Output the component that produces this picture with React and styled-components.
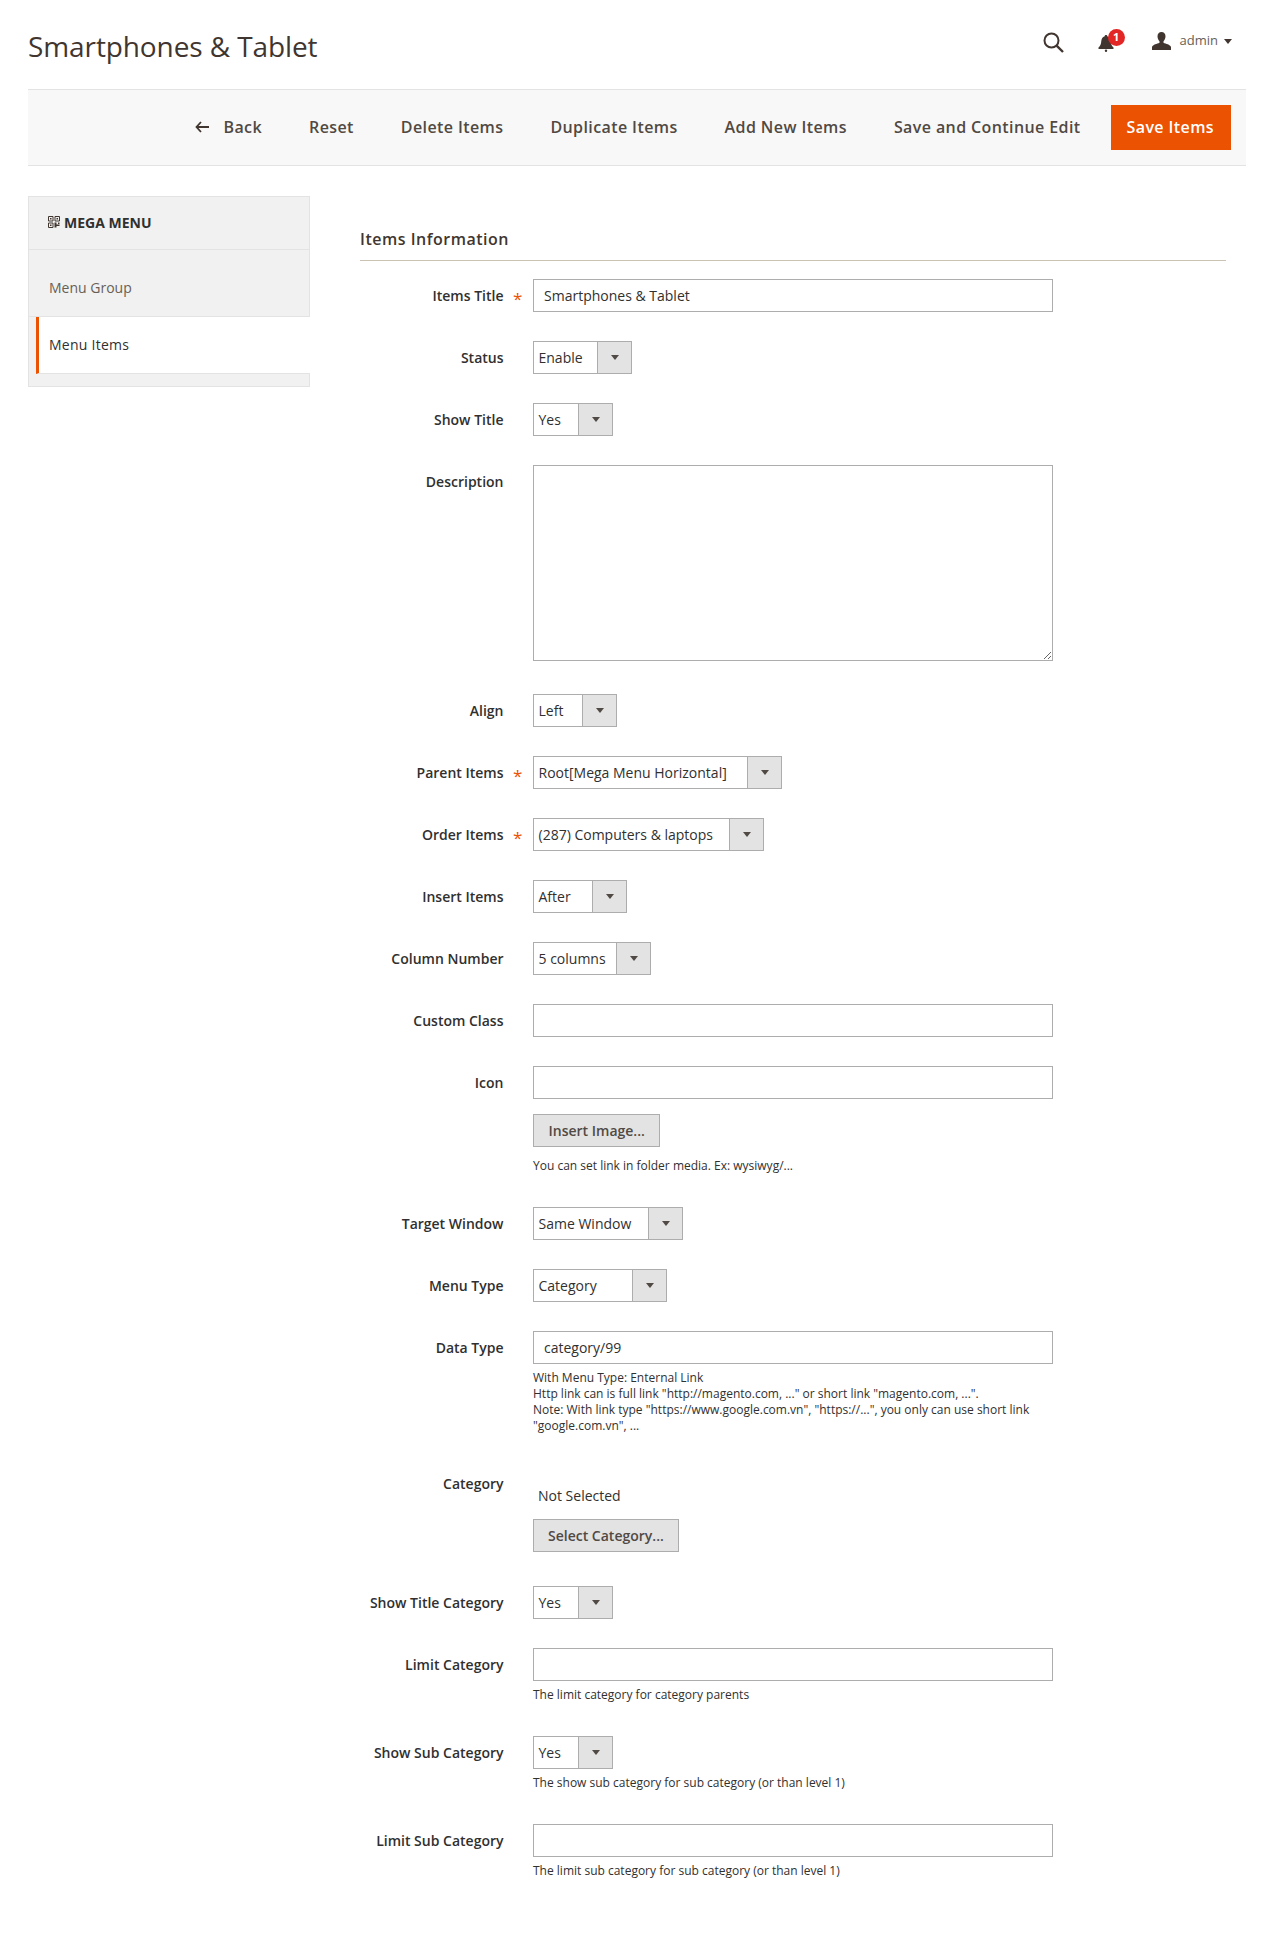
import React from 'react'
import styled, { createGlobalStyle } from 'styled-components'

const GlobalStyle = createGlobalStyle`
	* {
		box-sizing: border-box;
	}

	body {
		margin: 0;
		background: #fff;
		color: #303030;
		font-family: 'Open Sans', 'Liberation Sans', sans-serif;
		font-size: 14px;
	}
`

const Page = styled.div`
	width: 1276px;
	height: 1955px;
	padding: 0 28px;
	overflow: hidden;
`

const Header = styled.header`
	display: flex;
	justify-content: space-between;
	align-items: flex-start;
	height: 89px;
`

const PageTitle = styled.h1`
	margin: 27px 0 0;
	font-size: 28px;
	line-height: 38px;
	font-weight: 400;
	letter-spacing: -0.1px;
	color: #41362f;
`

const HeaderTools = styled.div`
	display: flex;
	align-items: flex-start;
	margin: 29px 16px 0 0;
`

const IconButton = styled.span`
	display: block;
	position: relative;
	height: 24px;
	margin-right: ${(props) => props.$gap}px;
`

const Badge = styled.span`
	position: absolute;
	top: 0;
	left: 10px;
	width: 17px;
	height: 17px;
	border-radius: 50%;
	background: #e22626;
	color: #fff;
	font-size: 11px;
	font-weight: 700;
	line-height: 16px;
	text-align: center;
`

const AdminName = styled.span`
	margin: 1px 0 0 9px;
	font-size: 13px;
	line-height: 20px;
	color: #676056;
`

const Caret = styled.span`
	width: 0;
	height: 0;
	margin: 10px 0 0 6px;
	border-style: solid;
	border-width: 5px 4px 0;
	border-color: #41362f transparent transparent;
`

const Toolbar = styled.div`
	display: flex;
	justify-content: flex-end;
	align-items: center;
	height: 77px;
	padding-right: 15px;
	margin-right: 2px;
	background: #f8f8f8;
	border-top: 1px solid #e3e3e3;
	border-bottom: 1px solid #e3e3e3;
`

const ToolbarLink = styled.a`
	display: flex;
	align-items: center;
	margin: 0 0 2px 47px;
	font-size: 16px;
	font-weight: 600;
	letter-spacing: 0.4px;
	color: #514943;
`

const BackArrow = styled.svg`
	width: 14px;
	height: 12px;
	margin-right: 14px;
`

const SaveButton = styled.button`
	height: 45px;
	margin-left: 30px;
	padding: 0 17px 2px 16px;
	border: 0;
	background: #eb5202;
	color: #fff;
	font-family: inherit;
	font-size: 16px;
	font-weight: 600;
	letter-spacing: 0.4px;
`

const Content = styled.div`
	display: flex;
	margin-top: 30px;
`

const Sidebar = styled.aside`
	flex: none;
	width: 282px;
	height: 191px;
	background: #f1f1f1;
	border: 1px solid #e3e3e3;
`

const SidebarTitle = styled.div`
	display: flex;
	align-items: center;
	height: 53px;
	padding: 0 0 2px 19px;
	border-bottom: 1px solid #e3e3e3;
	font-weight: 700;
	color: #303030;
`

const SidebarIcon = styled.svg`
	width: 12px;
	height: 12px;
	margin-right: 4px;
`

const SidebarItem = styled.div`
	display: flex;
	align-items: center;
	height: ${(props) => (props.$active ? '57px' : '67px')};
	margin-left: ${(props) => (props.$active ? '7px' : '0')};
	padding: ${(props) => (props.$active ? '0 0 2px 10px' : '8px 0 0 20px')};
	margin-right: -1px;
	background: ${(props) => (props.$active ? '#fff' : 'transparent')};
	border-left: ${(props) => (props.$active ? '3px solid #eb5202' : '0')};
	border-bottom: 1px solid #e3e3e3;
	letter-spacing: ${(props) => (props.$active ? '0.25px' : '0')};
	color: ${(props) => (props.$active ? '#303030' : '#676056')};
`

const Main = styled.main`
	flex: none;
	width: 866px;
	margin-left: 50px;
`

const SectionTitle = styled.h2`
	margin: 0 0 18px;
	padding: 32px 0 10px;
	border-bottom: 1px solid #cac3b4;
	font-size: 16px;
	line-height: 22px;
	font-weight: 600;
	letter-spacing: 0.5px;
	color: #41362f;
`

const Form = styled.div`
	display: flex;
	flex-direction: column;
	gap: 29px;
`

const Row = styled.div`
	display: grid;
	grid-template-columns: 143.5px 29.5px 1fr;
	padding-bottom: ${(props) => props.$extra || 0}px;
`

const Label = styled.label`
	padding-top: 7px;
	font-weight: 600;
	line-height: 19px;
	text-align: right;
	color: #303030;
`

const Required = styled.span`
	padding: 8px 0 0 9.5px;
	font-size: 17px;
	line-height: 23px;
	color: #eb5202;
`

const Control = styled.div`
	display: flex;
	flex-direction: column;
	align-items: flex-start;
`

const TextInput = styled.input`
	display: block;
	width: 520px;
	height: 33px;
	padding: 0 10px;
	border: 1px solid #adadad;
	background: #fff;
	color: #303030;
	font-family: inherit;
	font-size: 14px;
`

const TextArea = styled.textarea`
	display: block;
	width: 520px;
	height: 196px;
	border: 1px solid #adadad;
	background: #fff;
	font-family: inherit;
`

const Select = styled.div`
	display: flex;
	width: ${(props) => props.$width}px;
	height: 33px;
	border: 1px solid #adadad;
	background: #fff;
`

const SelectValue = styled.span`
	flex: 1;
	padding-left: 4.5px;
	line-height: 31px;
	white-space: nowrap;
	color: #303030;
`

const SelectArrow = styled.span`
	display: flex;
	flex: none;
	align-items: center;
	justify-content: center;
	width: 34px;
	background: #e3e3e3;
	border-left: 1px solid #adadad;

	&::after {
		content: '';
		border-style: solid;
		border-width: 5px 4px 0;
		border-color: #514943 transparent transparent;
	}
`

const ActionButton = styled.button`
	height: 33px;
	margin-top: ${(props) => props.$top}px;
	padding: 0 ${(props) => props.$pad}px;
	border: 1px solid #adadad;
	background: #e3e3e3;
	color: #514943;
	font-family: inherit;
	font-size: 14px;
	font-weight: 600;
`

const Note = styled.div`
	margin-top: ${(props) => props.$top || 6}px;
	padding-bottom: 4px;
	font-size: 12px;
	line-height: 16px;
	color: #303030;
`

const NotSelected = styled.div`
	padding: 19px 0 0 5px;
	line-height: 20px;
	color: #303030;
`

const DropDown = ({ value, width }) => (
	<Select $width={width}>
		<SelectValue>{value}</SelectValue>
		<SelectArrow />
	</Select>
)

const Field = ({ label, required, extra, children }) => (
	<Row $extra={extra}>
		<Label>{label}</Label>
		{required ? <Required>*</Required> : <span />}
		<Control>{children}</Control>
	</Row>
)

const App = () => (
	<Page>
		<GlobalStyle />
		<Header>
			<PageTitle>Smartphones &amp; Tablet</PageTitle>
			<HeaderTools>
				<IconButton $gap={34}>
					<svg width="21" height="21" viewBox="0 0 21 21" style={{ marginTop: 3 }}>
						<circle cx="8.5" cy="8.5" r="7" fill="none" stroke="#41362f" strokeWidth="2" />
						<path d="M13.6 13.6L20 20" stroke="#41362f" strokeWidth="2.4" fill="none" />
					</svg>
				</IconButton>
				<IconButton $gap={38}>
					<svg width="16" height="18" viewBox="0 0 16 18" style={{ marginTop: 5 }}>
						<path
							d="M8 1c-.8 0-1.300.5-1.300 1.200C4.500 3 3.500 4.700 3.300 7c-.2 3-.9 4.800-2.800 6.500V15h15v-1.500C13.600 11.800 12.900 10 12.700 7 12.500 4.700 11.500 3 9.300 2.200 9.300 1.500 8.800 1 8 1z"
							fill="#41362f"
						/>
						<circle cx="8" cy="16.800" r="1.200" fill="#41362f" />
					</svg>
					<Badge>1</Badge>
				</IconButton>
				<IconButton $gap={0}>
					<svg width="19" height="18" viewBox="0 0 19 18" style={{ marginTop: 3 }}>
						<path
							d="M9.500 0C7 0 5.500 1.800 5.500 4.300c0 2 .8 3.800 2 4.900v1.600C5 12 1 12.500 0 15v3h19v-3c-1-2.500-5-3-7.500-4.200V9.200c1.200-1.100 2-2.900 2-4.900C13.500 1.800 12 0 9.500 0z"
							fill="#41362f"
						/>
					</svg>
				</IconButton>
				<AdminName>admin</AdminName>
				<Caret />
			</HeaderTools>
		</Header>

		<Toolbar>
			<ToolbarLink>
				<BackArrow viewBox="0 0 14 12">
					<path d="M6 1L1.500 6L6 11M1.500 6H14" fill="none" stroke="#41362f" strokeWidth="1.800" />
				</BackArrow>
				Back
			</ToolbarLink>
			<ToolbarLink>Reset</ToolbarLink>
			<ToolbarLink>Delete Items</ToolbarLink>
			<ToolbarLink>Duplicate Items</ToolbarLink>
			<ToolbarLink>Add New Items</ToolbarLink>
			<ToolbarLink>Save and Continue Edit</ToolbarLink>
			<SaveButton>Save Items</SaveButton>
		</Toolbar>

		<Content>
			<Sidebar>
				<SidebarTitle>
					<SidebarIcon viewBox="0 0 12 12">
						<path
							d="M.5.5h4.500v4.500H.5zM7 .5h4.500v4.500H7zM.5 7h4.500v4.500H.5z"
							fill="none"
							stroke="#41362f"
							strokeWidth="1"
						/>
						<path d="M2 2h1.500v1.500H2zM8.500 2H10v1.500H8.500zM2 8.500h1.500V10H2zM6.500 6.500h2v2h3V10h-3v1.500h-2zM10 6.500h1.500V8H10z" fill="#41362f" />
					</SidebarIcon>
					MEGA MENU
				</SidebarTitle>
				<SidebarItem>Menu Group</SidebarItem>
				<SidebarItem $active>Menu Items</SidebarItem>
			</Sidebar>

			<Main>
				<SectionTitle>Items Information</SectionTitle>
				<Form>
					<Field label="Items Title" required>
						<TextInput readOnly value="Smartphones & Tablet" />
					</Field>
					<Field label="Status">
						<DropDown value="Enable" width={99} />
					</Field>
					<Field label="Show Title">
						<DropDown value="Yes" width={80} />
					</Field>
					<Field label="Description" extra={4}>
						<TextArea readOnly />
					</Field>
					<Field label="Align">
						<DropDown value="Left" width={84} />
					</Field>
					<Field label="Parent Items" required>
						<DropDown value="Root[Mega Menu Horizontal]" width={249} />
					</Field>
					<Field label="Order Items" required>
						<DropDown value="(287) Computers &amp; laptops" width={231} />
					</Field>
					<Field label="Insert Items">
						<DropDown value="After" width={94} />
					</Field>
					<Field label="Column Number">
						<DropDown value="5 columns" width={118} />
					</Field>
					<Field label="Custom Class">
						<TextInput readOnly />
					</Field>
					<Field label="Icon">
						<TextInput readOnly />
						<ActionButton $top={15} $pad={14.5}>Insert Image...</ActionButton>
						<Note $top={11}>You can set link in folder media. Ex: wysiwyg/...</Note>
					</Field>
					<Field label="Target Window">
						<DropDown value="Same Window" width={150} />
					</Field>
					<Field label="Menu Type">
						<DropDown value="Category" width={134} />
					</Field>
					<Field label="Data Type">
						<TextInput readOnly value="category/99" />
						<Note>
							With Menu Type: Enternal Link
							<br />
							Http link can is full link "http://magento.com, ..." or short link "magento.com, ...".
							<br />
							Note: With link type "https://www.google.com.vn", "https://...", you only can use short link
							<br />
							"google.com.vn", ...
						</Note>
					</Field>
					<Field label="Category" extra={5}>
						<NotSelected>Not Selected</NotSelected>
						<ActionButton $top={13} $pad={14}>Select Category...</ActionButton>
					</Field>
					<Field label="Show Title Category">
						<DropDown value="Yes" width={80} />
					</Field>
					<Field label="Limit Category">
						<TextInput readOnly />
						<Note>The limit category for category parents</Note>
					</Field>
					<Field label="Show Sub Category">
						<DropDown value="Yes" width={80} />
						<Note>The show sub category for sub category (or than level 1)</Note>
					</Field>
					<Field label="Limit Sub Category">
						<TextInput readOnly />
						<Note>The limit sub category for sub category (or than level 1)</Note>
					</Field>
				</Form>
			</Main>
		</Content>
	</Page>
)

export default App
